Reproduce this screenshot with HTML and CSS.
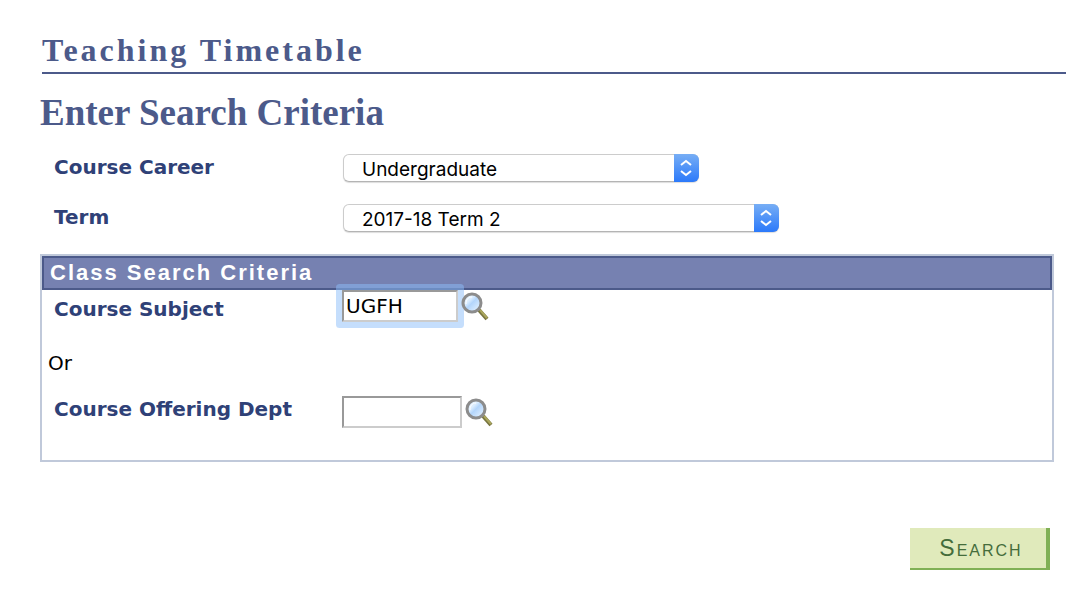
FILE: index.html
```html
<!DOCTYPE html>
<html lang="en">
<head>
<meta charset="utf-8">
<title>Teaching Timetable</title>
<link rel="stylesheet" href="styles.css">
</head>
<body>
<svg class="defs" width="0" height="0" aria-hidden="true">
  <defs>
    <linearGradient id="lens" x1="0" y1="0" x2="1" y2="1">
      <stop offset="0" stop-color="#e8f4ff"/>
      <stop offset=".35" stop-color="#dceeff"/>
      <stop offset=".5" stop-color="#b3d5fb"/>
      <stop offset="1" stop-color="#f0f8ff"/>
    </linearGradient>
    <symbol id="magnifier" viewBox="0 0 28 30">
      <path d="M18 19 26 28" stroke="#77743f" stroke-width="4"/>
      <path d="M19 19 26 27" stroke="#aaa65c" stroke-width="2"/>
      <circle cx="11" cy="12" r="9" fill="url(#lens)" stroke="#8c8c8c" stroke-width="3"/>
      <path d="M5 13C5 9 7 6 11 6" fill="none" stroke="#fff" stroke-width="1"/>
    </symbol>
    <symbol id="chevrons" viewBox="0 0 25 28">
      <path d="m7 11 5-4 5 4M7 17l5 4 5-4" fill="none" stroke="#fff" stroke-width="2"/>
    </symbol>
  </defs>
</svg>
<main class="page">
  <h1 class="page-title">Teaching Timetable</h1>
  <h2 class="section-title">Enter Search Criteria</h2>
  <form class="search-form">
    <div class="field">
      <label class="label" for="career">Course Career</label>
      <div class="select-box">
        <select class="select select-career" id="career"><option>Undergraduate</option></select>
        <span class="stepper"><svg class="stepper-icon" aria-hidden="true"><use href="#chevrons"/></svg></span>
      </div>
    </div>
    <div class="field">
      <label class="label" for="term">Term</label>
      <div class="select-box">
        <select class="select select-term" id="term"><option>2017-18 Term 2</option></select>
        <span class="stepper"><svg class="stepper-icon" aria-hidden="true"><use href="#chevrons"/></svg></span>
      </div>
    </div>
    <section class="panel">
      <h3 class="panel-title">Class Search Criteria</h3>
      <div class="panel-row panel-row-subject">
        <label class="label" for="subject">Course Subject</label>
        <div class="lookup">
          <input class="text-input active" id="subject" type="text" value="UGFH">
          <button class="lookup-button" type="button" aria-label="Look up Course Subject"><svg class="lookup-icon" aria-hidden="true"><use href="#magnifier"/></svg></button>
        </div>
      </div>
      <p class="or">Or</p>
      <div class="panel-row">
        <label class="label" for="dept">Course Offering Dept</label>
        <div class="lookup">
          <input class="text-input" id="dept" type="text">
          <button class="lookup-button" type="button" aria-label="Look up Course Offering Dept"><svg class="lookup-icon" aria-hidden="true"><use href="#magnifier"/></svg></button>
        </div>
      </div>
    </section>
    <div class="actions"><button class="search-button" type="submit">Search</button></div>
  </form>
</main>
</body>
</html>
```
FILE: styles.css
```css
* { box-sizing: border-box; }
body {
  margin: 0;
  background: #fff;
  color: #000;
  font-family: "DejaVu Sans", sans-serif;
}
.defs { position: absolute; }
.page { padding: 32px 0 24px 40px; }
.page-title, .section-title {
  color: #4c5a8a;
  font-family: "Liberation Serif", serif;
  font-weight: bold;
}
.page-title {
  margin: 0 0 0 2px;
  height: 42px;
  border-bottom: 2px solid #4c5a8a;
  font-size: 32px;
  line-height: 36px;
  letter-spacing: 3px;
}
.section-title {
  margin: 18px 0 20px;
  font-size: 37px;
  line-height: 42px;
}
.search-form { margin-right: 12px; }
.field {
  display: grid;
  grid-template-columns: 289px 1fr;
  align-items: start;
  margin: 0 0 22px 14px;
}
.label {
  color: #2f4177;
  font-size: 20px;
  font-weight: bold;
  line-height: 26px;
  white-space: nowrap;
}
.select-box { position: relative; justify-self: start; }
.select {
  display: block;
  appearance: none;
  height: 28px;
  padding: 3px 40px 0 18px;
  border: 1px solid #ccc;
  border-bottom-color: #b4b4b4;
  border-radius: 6px;
  box-shadow: 0 1px 1px #ddd;
  background: #fff;
  color: #000;
  font-family: Inter, sans-serif;
  font-size: 19px;
}
.select-career { width: 356px; }
.select-term { width: 436px; }
.stepper {
  position: absolute;
  top: 0;
  right: 0;
  width: 25px;
  height: 28px;
  border-radius: 0 6px 6px 0;
  background: linear-gradient(#77aef5, #2b79fa);
  pointer-events: none;
}
.stepper-icon { display: block; width: 25px; height: 28px; }
.panel {
  border: 2px solid #c0c9da;
  padding-bottom: 32px;
}
.panel-title {
  margin: 0;
  padding: 0 6px;
  border: 2px solid #4c5a8a;
  background: #7681b1;
  color: #fff;
  font-family: "Liberation Sans", sans-serif;
  font-size: 22px;
  line-height: 30px;
  height: 34px;
  letter-spacing: 2px;
}
.panel-row {
  display: grid;
  grid-template-columns: 288px 1fr;
  align-items: start;
  padding-left: 12px;
}
.panel-row-subject { align-items: end; }
.lookup { display: flex; align-items: center; gap: 3px; }
.text-input {
  width: 120px;
  height: 32px;
  padding: 0 2px;
  border: 2px solid;
  border-color: #999 #ccc #ccc #999;
  border-radius: 0;
  outline: none;
  background: #fff;
  color: #000;
  font-family: "DejaVu Sans", sans-serif;
  font-size: 20px;
}
.text-input.active {
  width: 116px;
  box-shadow: 0 0 0 6px rgba(140, 190, 250, .5);
  border-radius: 1px;
}
.lookup-button { padding: 0; border: 0; background: none; }
.lookup-icon { display: block; width: 28px; height: 30px; }
.or {
  margin: 28px 6px 20px;
  font-size: 20px;
  line-height: 26px;
}
.actions {
  display: flex;
  justify-content: flex-end;
  padding: 66px 4px 0 0;
}
.search-button {
  width: 140px;
  height: 42px;
  padding: 0 0 0 6px;
  border: 0 solid #80b055;
  border-width: 0 4px 2px 0;
  background: #e0eabb;
  color: #456d3b;
  font-family: "Liberation Sans", sans-serif;
  font-size: 23px;
  font-variant: small-caps;
  letter-spacing: 2px;
}
```
